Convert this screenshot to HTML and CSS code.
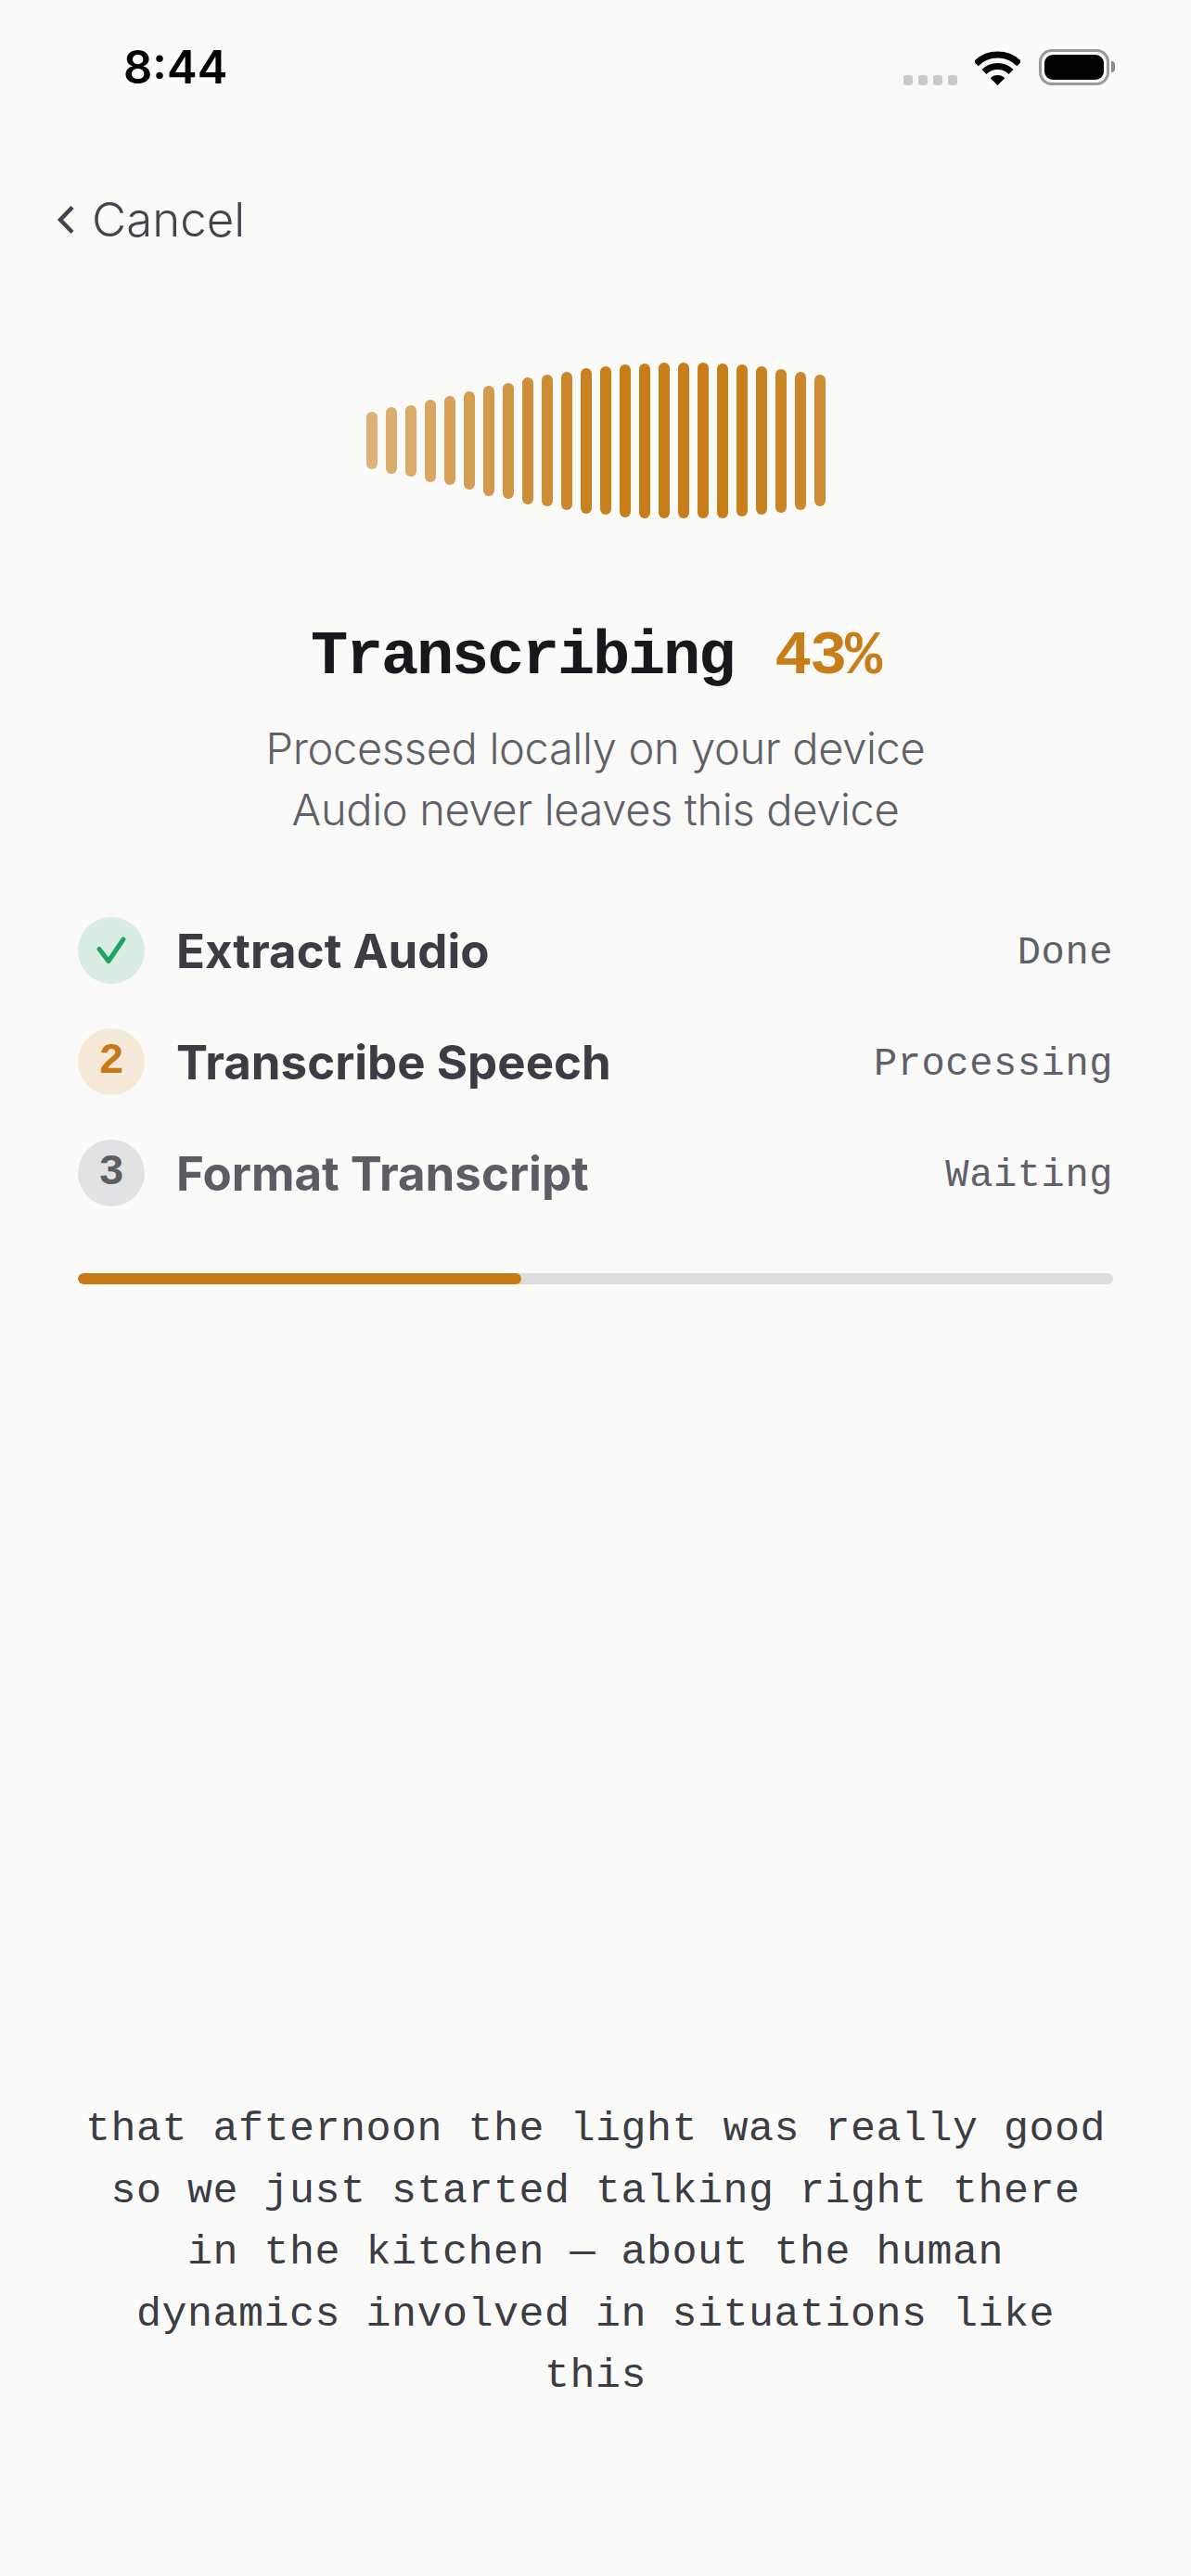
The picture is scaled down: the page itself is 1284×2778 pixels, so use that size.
FILE: index.html
```html
<!DOCTYPE html>
<html lang="en">

<head>
    <meta charset="UTF-8">
    <meta name="viewport" content="width=device-width, initial-scale=1.0">
    <title>Transcribing</title>
    <link rel="stylesheet" href="styles.css">
</head>

<body>
    <div class="screen">
        <div class="status_bar">
            <span class="time">8:44</span>
            <div class="status_icons">
                <div class="signal"><i></i><i></i><i></i><i></i></div>
                <svg class="wifi" width="49" height="37" viewBox="0 0 49 37">
                    <path d="M1.17 13.7A33 33 0 0 1 47.83 13.7" fill="none" stroke="#000" stroke-width="7"></path>
                    <path d="M10 22.5A20.5 20.5 0 0 1 39 22.5" fill="none" stroke="#000" stroke-width="7"></path>
                    <path d="M24.5 37L16.7 29.2A11 11 0 0 1 32.3 29.2Z" fill="#000"></path>
                </svg>
                <div class="battery"><i></i></div>
            </div>
        </div>

        <div class="nav">
            <svg class="back" width="20" height="32" viewBox="0 0 20 32">
                <path d="M17 2.5L4 16L17 29.5" fill="none" stroke="#44454c" stroke-width="4.5"></path>
            </svg>
            <span>Cancel</span>
        </div>

        <div class="wave">
            <i style="height:62px;opacity:.58"></i>
            <i style="height:72px;opacity:.62"></i>
            <i style="height:77px;opacity:.64"></i>
            <i style="height:89px;opacity:.68"></i>
            <i style="height:96px;opacity:.7"></i>
            <i style="height:106px;opacity:.74"></i>
            <i style="height:119px;opacity:.78"></i>
            <i style="height:125px;opacity:.8"></i>
            <i style="height:137px;opacity:.86"></i>
            <i style="height:142px;opacity:.88"></i>
            <i style="height:149px;opacity:.92"></i>
            <i style="height:157px;opacity:.96"></i>
            <i style="height:160px;opacity:.98"></i>
            <i style="height:165px"></i>
            <i style="height:167px"></i>
            <i style="height:168px"></i>
            <i style="height:168px"></i>
            <i style="height:168px"></i>
            <i style="height:167px"></i>
            <i style="height:164px;opacity:.98"></i>
            <i style="height:160px;opacity:.96"></i>
            <i style="height:155px;opacity:.94"></i>
            <i style="height:149px;opacity:.92"></i>
            <i style="height:142px;opacity:.88"></i>
        </div>

        <h1 class="title">
            <span>Transcribing</span>
            <span class="percent">43%</span>
        </h1>

        <p class="sub">Processed locally on your device<br>Audio never leaves this device</p>

        <ul class="steps">
            <li class="step">
                <span class="badge badge_done">
                    <svg width="72" height="72" viewBox="0 0 72 72">
                        <path d="M23 34.5L33 47.5L49 24" fill="none" stroke="#1fa463" stroke-width="5" stroke-linecap="round" stroke-linejoin="round"></path>
                    </svg>
                </span>
                <span class="step_name">Extract Audio</span>
                <span class="step_state">Done</span>
            </li>
            <li class="step">
                <span class="badge badge_active">2</span>
                <span class="step_name">Transcribe Speech</span>
                <span class="step_state">Processing</span>
            </li>
            <li class="step step_waiting">
                <span class="badge badge_wait">3</span>
                <span class="step_name">Format Transcript</span>
                <span class="step_state">Waiting</span>
            </li>
        </ul>

        <div class="progress">
            <div class="progress_fill" style="width:42.8%"></div>
        </div>

        <p class="transcript">that afternoon the light was really good so we just started talking right there in the kitchen — about the human dynamics involved in situations like this</p>
    </div>
</body>

</html>
```

FILE: styles.css
```css
* {
    margin: 0px;
    padding: 0px;
}

body {
    background-color: #fafaf8;
}

.screen {
    width: 1284px;
    height: 2778px;
    display: flex;
    flex-direction: column;
    overflow: hidden;
    font-family: "Inter", "Liberation Sans", sans-serif;
}

/* status bar */

.status_bar {
    height: 92px;
    padding: 0 88px 0 133px;
    display: flex;
    justify-content: space-between;
    align-items: flex-end;
}

.time {
    font-size: 49px;
    line-height: 38px;
    font-weight: 600;
    color: #000;
}

.status_icons {
    display: flex;
    align-items: flex-end;
}

.signal {
    display: flex;
    gap: 6px;
    margin-right: 19px;
}

.signal i {
    width: 10px;
    height: 11px;
    border-radius: 3px;
    background-color: #c8c8c8;
}

.battery {
    width: 76px;
    height: 39px;
    margin-left: 20px;
    padding: 3px;
    box-sizing: border-box;
    border: 3px solid #999;
    border-radius: 14px;
    position: relative;
}

.battery i {
    display: block;
    height: 100%;
    border-radius: 9px;
    background-color: #000;
}

.battery::after {
    content: "";
    position: absolute;
    right: -9px;
    top: 10px;
    width: 4px;
    height: 12px;
    border-radius: 0 6px 6px 0;
    background-color: #888;
}

/* cancel */

.nav {
    margin-top: 115px;
    padding-left: 61px;
    display: flex;
    align-items: center;
    gap: 18px;
    font-size: 51px;
    line-height: 60px;
    font-weight: 300;
    color: #44454c;
}

/* waveform */

.wave {
    margin-top: 124px;
    height: 168px;
    display: flex;
    justify-content: center;
    align-items: center;
    gap: 9px;
}

.wave i {
    width: 12px;
    border-radius: 6px;
    background-color: #c77d18;
}

/* heading */

.title {
    margin-top: 111px;
    display: flex;
    justify-content: center;
    gap: 44px;
    font-family: "Liberation Mono", monospace;
    font-size: 67px;
    letter-spacing: -2.2px;
    line-height: 76px;
    font-weight: 700;
    color: #17181c;
}

.percent {
    color: #c77d18;
}

.sub {
    margin-top: 28px;
    text-align: center;
    font-size: 47px;
    letter-spacing: -0.35px;
    line-height: 66px;
    font-weight: 300;
    color: #5f6068;
}

/* steps */

.steps {
    margin: 83px 84px 0;
    list-style: none;
}

.step {
    height: 72px;
    margin-bottom: 48px;
    display: flex;
    align-items: center;
}

.badge {
    width: 72px;
    height: 72px;
    border-radius: 50%;
    margin-right: 34px;
    display: flex;
    align-items: center;
    justify-content: center;
    font-family: "Liberation Mono", monospace;
    font-size: 46px;
    font-weight: 700;
}

.badge_done {
    background-color: #d9ede3;
}

.badge_active {
    background-color: #f5e9da;
    color: #c77a16;
}

.badge_wait {
    background-color: #e2e2e4;
    color: #5b5c64;
}

.step_name {
    flex: 1;
    font-size: 51px;
    font-weight: 700;
    color: #3c3d44;
}

.step_waiting .step_name {
    color: #5b5c64;
}

.step_state {
    padding-top: 5px;
    font-family: "Liberation Mono", monospace;
    font-size: 42px;
    letter-spacing: 0.6px;
    color: #5f6068;
}

/* progress */

.progress {
    margin: 24px 84px 0;
    height: 12px;
    border-radius: 6px;
    background-color: #dedede;
    overflow: hidden;
}

.progress_fill {
    height: 100%;
    border-radius: 6px;
    background-color: #c77a16;
}

/* transcript */

.transcript {
    margin: auto 84px 0;
    padding-bottom: 181px;
    text-align: center;
    font-family: "Liberation Mono", monospace;
    font-size: 45px;
    line-height: 66.6px;
    letter-spacing: 0.5px;
    color: #3c3d44;
}
```
